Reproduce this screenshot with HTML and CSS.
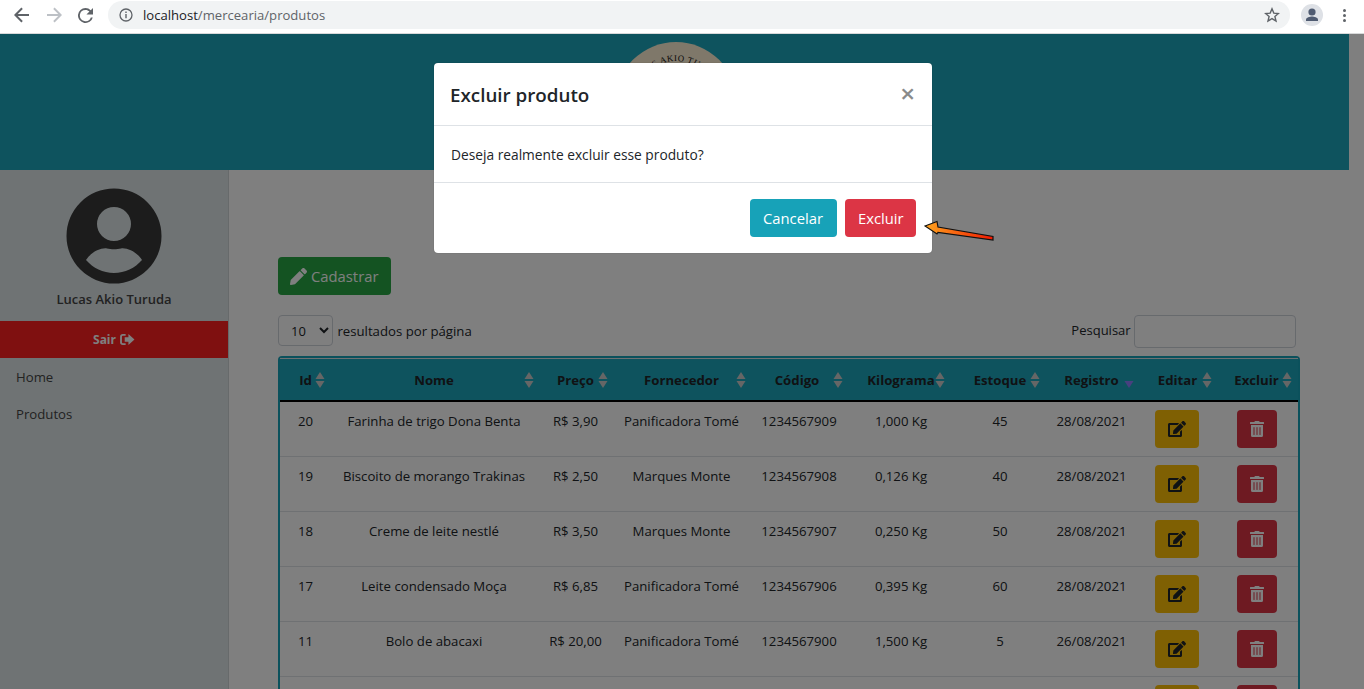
FILE: index.html
```html
<!DOCTYPE html>
<html lang="pt-BR">
<head>
	<meta charset="utf-8">
	<title>Mercearia - Produtos</title>
	<link rel="stylesheet" href="styles.css">
</head>
<body>

	<!-- Icons used more than once -->
	<svg class="sprite" aria-hidden="true">
		<symbol id="ic-edit" viewBox="0 0 576 512"><path d="M402.6 83.2l90.2 90.2c3.8 3.8 3.8 10 0 13.8L274.4 405.6l-92.8 10.3c-12.4 1.4-22.9-9.1-21.5-21.5l10.3-92.8L388.8 83.2c3.8-3.8 10-3.8 13.8 0zm162-22.9l-48.8-48.8c-15.2-15.2-39.9-15.2-55.2 0l-35.4 35.4c-3.8 3.8-3.8 10 0 13.8l90.2 90.2c3.8 3.8 10 3.8 13.8 0l35.4-35.4c15.2-15.3 15.2-40 0-55.2zM384 346.2V448H64V128h229.8c3.2 0 6.2-1.3 8.5-3.5l40-40c7.6-7.6 2.2-20.5-8.5-20.5H48C21.5 64 0 85.5 0 112v352c0 26.5 21.5 48 48 48h352c26.5 0 48-21.5 48-48V306.2c0-10.7-12.9-16-20.5-8.5l-40 40c-2.2 2.3-3.5 5.3-3.5 8.5z"/></symbol>
		<symbol id="ic-trash" viewBox="0 0 448 512"><path d="M32 464a48 48 0 0 0 48 48h288a48 48 0 0 0 48-48V128H32zm272-256a16 16 0 0 1 32 0v224a16 16 0 0 1-32 0zm-96 0a16 16 0 0 1 32 0v224a16 16 0 0 1-32 0zm-96 0a16 16 0 0 1 32 0v224a16 16 0 0 1-32 0zM432 32H312l-9.4-18.7A24 24 0 0 0 281.1 0H166.8a23.72 23.72 0 0 0-21.4 13.3L136 32H16A16 16 0 0 0 0 48v32a16 16 0 0 0 16 16h416a16 16 0 0 0 16-16V48a16 16 0 0 0-16-16z"/></symbol>
		<symbol id="ic-sort" viewBox="0 0 10 16"><path d="M5 0l4.5 7h-9z"/><path d="M5 16l4.5-7h-9z"/></symbol>
	</svg>

	<!-- Browser bar -->
	<div class="chrome">
		<svg class="nav-icon" viewBox="0 0 16 16"><path d="M15 7H3.8l5-5L7.4.6 0 8l7.4 7.4 1.4-1.4-5-5H15z" fill="#5f6368"/></svg>
		<svg class="nav-icon nav-forward" viewBox="0 0 16 16"><path d="M1 7h11.2l-5-5L8.600.6 16 8l-7.400 7.400-1.400-1.400 5-5H1z" fill="#bdc1c6"/></svg>
		<svg class="nav-icon nav-reload" viewBox="0 0 16 16"><path d="M13.600 2.350A7.950 7.950 0 0 0 8 0a8 8 0 1 0 7.740 10h-2.080A6 6 0 1 1 8 2c1.660 0 3.140.690 4.220 1.780L9 7h7V0z" fill="#5f6368"/></svg>
		<div class="omnibox">
			<svg class="info-icon" viewBox="0 0 14 14"><circle cx="7" cy="7" r="6" fill="none" stroke="#5f6368" stroke-width="1.300"/><path d="M6.300 6h1.400v4.200H6.300zM6.300 3.600h1.400V5H6.300z" fill="#5f6368"/></svg>
			<span class="url"><span class="url-host">localhost</span>/mercearia/produtos</span>
			<svg class="star-icon" viewBox="0 0 16 16"><path d="M8 1.800l1.800 4.300 4.600.4-3.500 3 1.100 4.500L8 11.600 4 14l1.100-4.500-3.500-3 4.600-.4z" fill="none" stroke="#5f6368" stroke-width="1.400"/></svg>
		</div>
		<div class="profile">
			<svg viewBox="0 0 22 22"><circle cx="11" cy="11" r="11" fill="#dee1e6"/><circle cx="11" cy="8" r="3.600" fill="#4f5b71"/><path d="M5 17v-1.600c0-2 4-3 6-3s6 1 6 3V17z" fill="#4f5b71"/></svg>
		</div>
		<div class="menu-dots"><i></i><i></i><i></i></div>
	</div>

	<div class="viewport">
		<div class="page">
			<header class="top">
				<svg class="logo" viewBox="0 0 122 122">
					<circle cx="61" cy="61" r="61" fill="#fff0d4"/>
					<path id="logo-arc" d="M19 61a42 42 0 0 1 84 0" fill="none"/>
					<text class="logo-text"><textPath href="#logo-arc" startOffset="50.500%" text-anchor="middle">LUCAS AKIO TURUDA</textPath></text>
				</svg>
			</header>

			<div class="layout">
				<aside class="sidebar">
					<svg class="avatar" viewBox="-48 -48 96 96">
						<path fill-rule="evenodd" fill="#383838" d="M0-47.500a47.500 47.500 0 1 0 0 95a47.500 47.500 0 1 0 0-95zM0-29a17 17 0 1 1 0 34a17 17 0 1 1 0-34zM-28 24C-23 16-13 11.500-7 12.500-3 13.500 3 13.500 7 12.500 13 11.500 23 16 28 24 21 32 11 37 0 37-11 37-21 32-28 24z"/>
					</svg>
					<div class="user-name">Lucas Akio Turuda</div>
					<a class="logout">Sair
						<svg viewBox="0 0 16 14"><path d="M6 1H3a3 3 0 0 0-3 3v6a3 3 0 0 0 3 3h3v-2H3a1 1 0 0 1-1-1V4a1 1 0 0 1 1-1h3z"/><path d="M9 1l6.500 6L9 13V9.500H5v-5h4z"/></svg>
					</a>
					<nav class="side-nav">
						<a>Home</a>
						<a>Produtos</a>
					</nav>
				</aside>

				<main class="content">
					<button class="btn btn-new">
						<svg viewBox="0 0 512 512"><path d="M497.900 142.100l-46.100 46.100c-4.700 4.700-12.300 4.700-17 0l-111-111c-4.700-4.700-4.700-12.300 0-17l46.100-46.100c18.700-18.700 49.100-18.700 67.900 0l60.100 60.100c18.800 18.700 18.800 49.100 0 67.900zM284.200 99.800L21.600 362.400.4 483.900c-2.900 16.400 11.400 30.600 27.800 27.800l121.500-21.300 262.600-262.600c4.700-4.700 4.700-12.300 0-17l-111-111c-4.800-4.700-12.400-4.700-17.100 0z"/></svg>
						Cadastrar
					</button>

					<div class="table-tools">
						<label class="page-size">
							<select><option>10</option></select>
							resultados por página
						</label>
						<label class="search">Pesquisar <input type="text"></label>
					</div>

					<div class="table-wrap">
						<table class="products">
							<colgroup>
								<col class="c-id"><col class="c-nome"><col class="c-preco"><col class="c-forn"><col class="c-cod">
								<col class="c-kg"><col class="c-est"><col class="c-reg"><col class="c-edit"><col class="c-del">
							</colgroup>
							<thead>
								<tr>
									<th>Id <svg class="sort"><use href="#ic-sort"/></svg></th>
									<th>Nome <svg class="sort"><use href="#ic-sort"/></svg></th>
									<th>Preço <svg class="sort"><use href="#ic-sort"/></svg></th>
									<th>Fornecedor <svg class="sort"><use href="#ic-sort"/></svg></th>
									<th class="th-cod">Código <svg class="sort"><use href="#ic-sort"/></svg></th>
									<th>Kilograma <svg class="sort"><use href="#ic-sort"/></svg></th>
									<th>Estoque <svg class="sort"><use href="#ic-sort"/></svg></th>
									<th>Registro <svg class="sort sort-active" viewBox="0 0 10 16"><path d="M5 16l4.500-7h-9z"/></svg></th>
									<th>Editar <svg class="sort"><use href="#ic-sort"/></svg></th>
									<th>Excluir <svg class="sort"><use href="#ic-sort"/></svg></th>
								</tr>
							</thead>
							<tbody>
								<tr>
									<td>20</td><td>Farinha de trigo Dona Benta</td><td>R$ 3,90</td><td>Panificadora Tomé</td><td>1234567909</td><td>1,000 Kg</td><td>45</td><td>28/08/2021</td>
									<td class="act"><a class="btn-edit"><svg><use href="#ic-edit"/></svg></a></td>
									<td class="act"><a class="btn-del"><svg><use href="#ic-trash"/></svg></a></td>
								</tr>
								<tr>
									<td>19</td><td>Biscoito de morango Trakinas</td><td>R$ 2,50</td><td>Marques Monte</td><td>1234567908</td><td>0,126 Kg</td><td>40</td><td>28/08/2021</td>
									<td class="act"><a class="btn-edit"><svg><use href="#ic-edit"/></svg></a></td>
									<td class="act"><a class="btn-del"><svg><use href="#ic-trash"/></svg></a></td>
								</tr>
								<tr>
									<td>18</td><td>Creme de leite nestlé</td><td>R$ 3,50</td><td>Marques Monte</td><td>1234567907</td><td>0,250 Kg</td><td>50</td><td>28/08/2021</td>
									<td class="act"><a class="btn-edit"><svg><use href="#ic-edit"/></svg></a></td>
									<td class="act"><a class="btn-del"><svg><use href="#ic-trash"/></svg></a></td>
								</tr>
								<tr>
									<td>17</td><td>Leite condensado Moça</td><td>R$ 6,85</td><td>Panificadora Tomé</td><td>1234567906</td><td>0,395 Kg</td><td>60</td><td>28/08/2021</td>
									<td class="act"><a class="btn-edit"><svg><use href="#ic-edit"/></svg></a></td>
									<td class="act"><a class="btn-del"><svg><use href="#ic-trash"/></svg></a></td>
								</tr>
								<tr>
									<td>11</td><td>Bolo de abacaxi</td><td>R$ 20,00</td><td>Panificadora Tomé</td><td>1234567900</td><td>1,500 Kg</td><td>5</td><td>26/08/2021</td>
									<td class="act"><a class="btn-edit"><svg><use href="#ic-edit"/></svg></a></td>
									<td class="act"><a class="btn-del"><svg><use href="#ic-trash"/></svg></a></td>
								</tr>
								<tr>
									<td></td><td></td><td></td><td></td><td></td><td></td><td></td><td></td>
									<td class="act"><a class="btn-edit"><svg><use href="#ic-edit"/></svg></a></td>
									<td class="act"><a class="btn-del"><svg><use href="#ic-trash"/></svg></a></td>
								</tr>
							</tbody>
						</table>
					</div>
				</main>
			</div>
		</div>

		<!-- Confirmation modal over the dimmed page -->
		<div class="backdrop">
			<div class="modal">
				<div class="modal-header">
					<h5>Excluir produto</h5>
					<span class="close">&times;</span>
				</div>
				<div class="modal-body">Deseja realmente excluir esse produto?</div>
				<div class="modal-footer">
					<button class="btn btn-cancel">Cancelar</button>
					<button class="btn btn-delete">Excluir</button>
				</div>
				<svg class="pointer" viewBox="0 0 72 21">
					<defs>
						<linearGradient id="arrow-fill" x1="0" x2="1" y1="0" y2="0">
							<stop offset="0" stop-color="#ffa51f"/>
							<stop offset="1" stop-color="#f01800"/>
						</linearGradient>
					</defs>
					<path d="M1 6L13 1.500 14 7 69 16.500 69 20 14 12.300 13 14z" fill="url(#arrow-fill)" stroke="#111" stroke-width="1.200"/>
				</svg>
			</div>
		</div>
	</div>

</body>
</html>
```

FILE: styles.css
```css
* {
	box-sizing: border-box;
}

html, body {
	height: 100%;
}

body {
	margin: 0;
	overflow: hidden;
	font-family: "Open Sans", "Noto Sans", sans-serif;
	font-size: 13.200px;
	color: #212529;
	background-color: #fff;
}

.sprite {
	display: none;
}

/* Browser bar */
.chrome {
	display: flex;
	align-items: center;
	height: 34px;
	padding-bottom: 3px;
	background-color: #fff;
	border-bottom: 1px solid #d8d9da;
}

.nav-icon {
	width: 16px;
	height: 16px;
	margin-left: 14px;
	flex: none;
}

.nav-forward {
	margin-left: 16px;
}

.nav-reload {
	margin-left: 16px;
	width: 15px;
	height: 15px;
}

.omnibox {
	display: flex;
	align-items: center;
	width: 1182px;
	height: 28px;
	margin-left: 15px;
	padding: 0 10px 0 11px;
	background-color: #f1f3f4;
	border-radius: 14px;
}

.info-icon {
	width: 14px;
	height: 14px;
}

.url {
	margin-left: 10px;
	font-size: 13.100px;
	color: #5f6368;
}

.url-host {
	color: #202124;
}

.star-icon {
	width: 16px;
	height: 16px;
	margin-left: auto;
}

.profile {
	width: 22px;
	height: 22px;
	margin-left: 11px;
}

.menu-dots {
	display: flex;
	flex-direction: column;
	gap: 2px;
	margin-left: 20px;
}

.menu-dots i {
	width: 3px;
	height: 3px;
	border-radius: 50%;
	background-color: #5f6368;
}

/* Page under the modal */
.viewport {
	position: relative;
	height: 655px;
	overflow: hidden;
}

.page {
	width: 1349px;
}

.top {
	display: flex;
	justify-content: center;
	height: 136px;
	padding-top: 8px;
	background-color: #1ca7bc;
}

.logo {
	width: 122px;
	height: 122px;
	margin-left: 2px;
}

.logo-text {
	font-family: "Liberation Serif", serif;
	font-size: 8.800px;
	letter-spacing: 0.500px;
	fill: #111;
}

.layout {
	display: flex;
}

.sidebar {
	width: 229px;
	min-height: 519px;
	flex: none;
	padding-top: 18px;
	text-align: center;
	background-color: #dee6e8;
	border-right: 1px solid #cfd4d6;
}

.avatar {
	display: block;
	width: 96px;
	height: 96px;
	margin: 0 auto;
}

.user-name {
	margin-top: 6px;
	font-size: 13px;
	font-weight: 550;
	color: #444;
}

.logout {
	display: flex;
	align-items: center;
	justify-content: center;
	gap: 4px;
	height: 37px;
	margin-top: 13px;
	font-weight: 700;
	font-size: 12px;
	color: #fff;
	background-color: #ff2020;
}

.logout svg {
	width: 15px;
	height: 13px;
	fill: #fff;
}

.side-nav {
	padding-top: 2px;
}

.side-nav a {
	display: block;
	padding: 8px 16px 10px;
	height: 37px;
	text-align: left;
	color: #444;
}

/* Main column */
.content {
	flex: 1;
	padding: 87px 49px 0 49px;
	background-color: #fff;
}

.btn {
	height: 38px;
	padding: 0 13px;
	font-family: inherit;
	font-size: 14.800px;
	color: #fff;
	border: 1px solid transparent;
	border-radius: 4px;
}

.btn-new {
	display: flex;
	align-items: center;
	gap: 4px;
	width: 113px;
	padding: 0 11px;
	background-color: #28a745;
}

.btn-new svg {
	width: 17px;
	height: 17px;
	fill: #fff;
}

.table-tools {
	display: flex;
	align-items: center;
	justify-content: space-between;
	height: 33px;
	margin-top: 20px;
	padding-right: 4px;
}

.page-size {
	margin-top: -2px;
}

.page-size select {
	width: 55px;
	height: 31px;
	margin-right: 1px;
	padding-left: 8px;
	font-family: inherit;
	font-size: 13px;
	color: #212529;
	background-color: #fff;
	border: 1px solid #ced4da;
	border-radius: 4px;
}

.search {
	font-size: 13px;
}

.search input {
	width: 162px;
	height: 33px;
	vertical-align: middle;
	border: 1px solid #ced4da;
	border-radius: 4px;
}

.table-wrap {
	margin-top: 8px;
	border: 2px solid #17a2b8;
	border-bottom: 0;
	border-radius: 4px 4px 0 0;
}

.products {
	width: 100%;
	table-layout: fixed;
	border-collapse: collapse;
	text-align: center;
}

.c-id { width: 51px; }
.c-nome { width: 209px; }
.c-preco { width: 74px; }
.c-forn { width: 138px; }
.c-cod { width: 97px; }
.c-kg { width: 102px; }
.c-est { width: 95px; }
.c-reg { width: 94px; }
.c-edit { width: 78px; }

.products th {
	position: relative;
	height: 42px;
	padding: 2px 3px 0 0;
	font-weight: 700;
	color: #212529;
	background-color: #1ca7bc;
	border-top: 1px solid #dee2e6;
	border-bottom: 2px solid #000;
}

.products th.th-cod {
	padding-right: 7px;
}

.sort {
	position: absolute;
	top: 13px;
	right: 6px;
	width: 10px;
	height: 16px;
	fill: #ccc;
}

.sort-active {
	fill: #9080ff;
}

.products td {
	height: 55px;
	padding: 10px 3px 0 0;
	vertical-align: top;
	border-bottom: 1px solid #dee2e6;
}

.products tbody tr:first-child td {
	height: 56px;
}

.products tr > :nth-child(1) {
	padding-right: 0;
}

.products tr > :nth-child(6) {
	padding-right: 0;
	padding-left: 2px;
}

.products tr > :nth-child(7) {
	padding-right: 0;
	padding-left: 3px;
}

.products td.act {
	padding-top: 8px;
}

.products td.act:nth-child(9) {
	padding-right: 5px;
}

.btn-edit,
.btn-del {
	display: inline-flex;
	align-items: center;
	justify-content: center;
	height: 38px;
	border-radius: 4px;
}

.btn-edit {
	width: 44px;
	background-color: #ffc107;
	fill: #212529;
}

.btn-del {
	width: 40px;
	background-color: #dc3545;
	fill: #fff;
}

.btn-edit svg {
	width: 18px;
	height: 16px;
}

.btn-del svg {
	width: 14px;
	height: 16px;
}

/* Modal */
.backdrop {
	position: absolute;
	inset: 0;
	padding-top: 29px;
	background-color: rgba(0, 0, 0, 0.5);
}

.modal {
	position: relative;
	width: 498px;
	height: 190px;
	margin-left: 434px;
	background-color: #fff;
	border-radius: 4px;
	box-shadow: 0 0 1px rgba(0, 0, 0, 0.4);
}

.modal-header {
	display: flex;
	align-items: center;
	justify-content: space-between;
	height: 63px;
	padding: 1px 17px 0 16px;
	border-bottom: 1px solid #dee2e6;
}

.modal-header h5 {
	margin: 0;
	font-size: 18.800px;
	font-weight: 550;
	color: #212529;
}

.close {
	margin-top: -4px;
	font-size: 26px;
	font-weight: 600;
	line-height: 1;
	color: #8a8a8a;
}

.modal-body {
	display: flex;
	align-items: center;
	height: 57px;
	padding: 0 17px;
	font-size: 13.750px;
	border-bottom: 1px solid #dee2e6;
}

.modal-footer {
	display: flex;
	justify-content: flex-end;
	gap: 8px;
	padding: 16px 16px 0;
}

.btn-cancel {
	width: 87px;
	padding-right: 14px;
	padding-left: 12px;
	background-color: #17a2b8;
}

.btn-delete {
	width: 71px;
	padding-right: 14px;
	padding-left: 12px;
	background-color: #dc3545;
}

.pointer {
	position: absolute;
	left: 490px;
	top: 157px;
	width: 72px;
	height: 21px;
}
```
